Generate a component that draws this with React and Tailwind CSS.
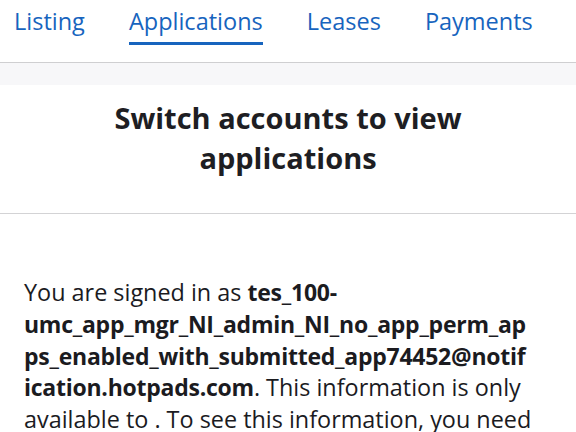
const tabs = ["Listing", "Applications", "Leases", "Payments"];

export default function App() {
  return (
    <div className="min-h-screen bg-white font-['Open_Sans',sans-serif]">
      <nav className="flex h-[63px] items-start gap-[44px] border-b border-[#cfcfd1] pl-[14px] pt-[4px]">
        {tabs.map((t) => {
          const active = t === "Applications";
          return (
            <div key={t} className="flex flex-col">
              <span className="text-[23.5px] leading-[34px] text-[#1764be]">{t}</span>
              <span
                className={
                  active
                    ? "mt-[4px] h-[3px] bg-[#1764be]"
                    : "mt-[4px] h-[3px] bg-transparent"
                }
              />
            </div>
          );
        })}
      </nav>
      <div className="h-[22px] bg-[#f7f7f9]" />
      <div className="border-b border-[#d3d3d5] px-[40px] pb-[35px] pt-[13px] text-center">
        <h1 className="text-[29px] font-bold leading-[40px] text-[#1e1e23]">
          Switch accounts to view applications
        </h1>
      </div>
      <p className="px-[24px] pt-[63px] text-[23.4px] leading-[31.75px] text-[#1b1b1f]">
        You are signed in as{" "}
        <strong className="text-[23px] font-bold tracking-[-0.25px]">
          tes_100-umc_app_mgr_NI_admin_NI_no_app_perm_ap<wbr />
          ps_enabled_with_submitted_app74452@notif<wbr />
          ication.hotpads.com
        </strong>
        . This information is only available to . To see this information, you
        need to switch to the account that has access.
      </p>
    </div>
  );
}
